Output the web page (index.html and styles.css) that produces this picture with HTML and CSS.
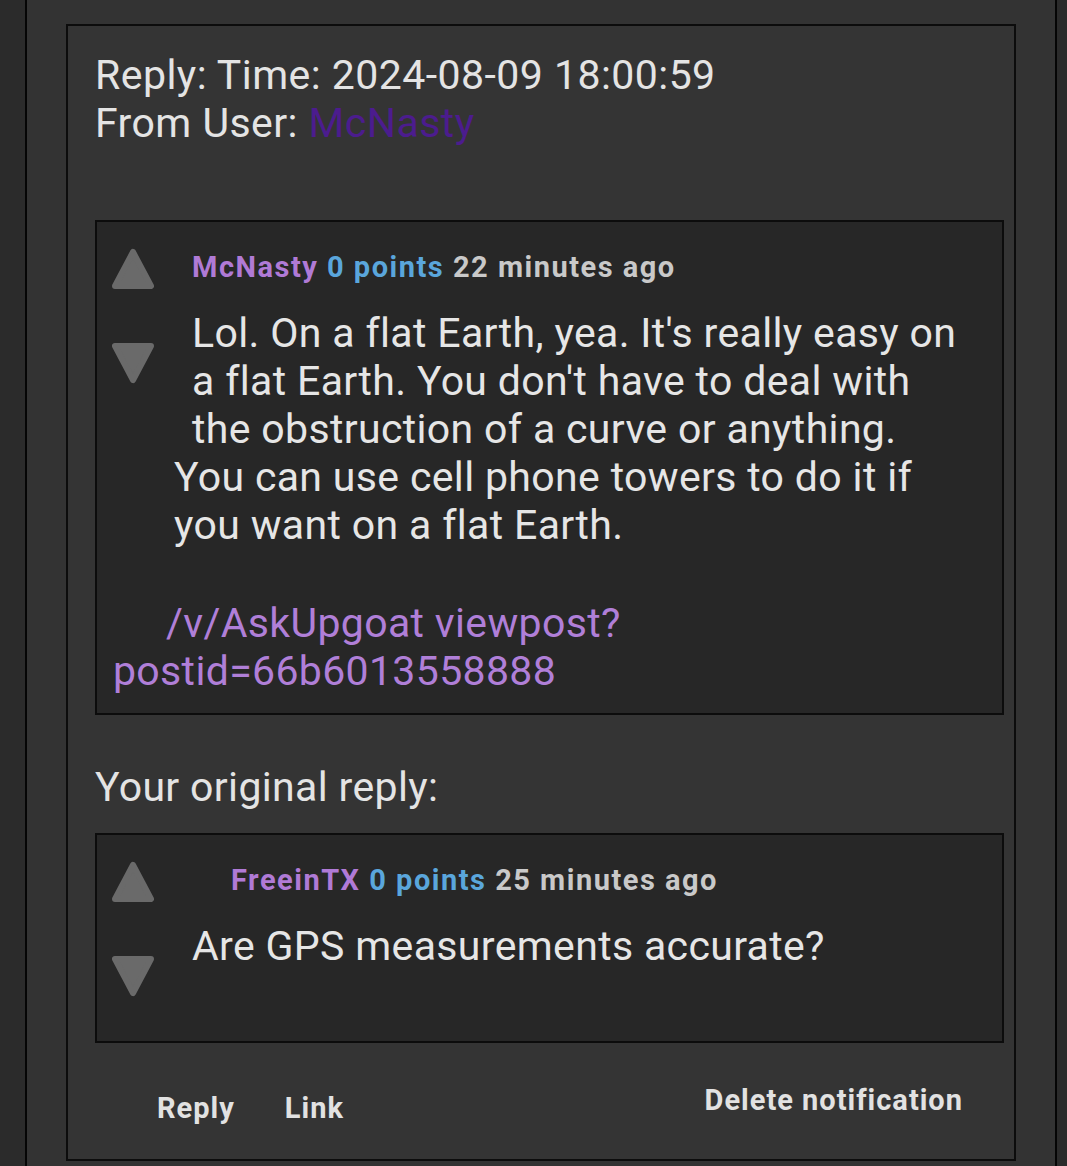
FILE: index.html
```html
<!DOCTYPE html>
<html lang="en">
<head>
    <meta charset="UTF-8">
    <meta name="viewport" content="width=device-width, initial-scale=1.0">
    <title>Reply notification</title>
    <link rel="stylesheet" href="styles.css">
</head>
<body>
    <div id="page">
        <div class="notification">
            <div class="notify-head">
                Reply: Time: 2024-08-09 18:00:59
                <br>
                From User: <a href="#" class="from-user">McNasty</a>
            </div>

            <div class="comment">
                <div class="comment-top">
                    <div class="votes">
                        <svg class="arrow" viewBox="0 0 42 42"><polygon points="21,4 39,38 3,38"/></svg>
                        <svg class="arrow" viewBox="0 0 42 42"><polygon points="3,4 39,4 21,38"/></svg>
                    </div>
                    <div class="entry">
                        <p class="tagline">
                            <a href="#" class="author">McNasty</a>
                            <span class="score">0 points</span>
                            <span class="time">22 minutes ago</span>
                        </p>
                        <p class="md">Lol. On a flat Earth, yea. It's really easy on a flat Earth. You don't have to deal with the obstruction of a curve or anything.</p>
                    </div>
                </div>
                <p class="md more">You can use cell phone towers to do it if you want on a flat Earth.</p>
                <p class="md post-link"><a href="#">/v/AskUpgoat viewpost?<br>postid=66b6013558888</a></p>
            </div>

            <div class="original">Your original reply:</div>

            <div class="comment">
                <div class="comment-top">
                    <div class="votes">
                        <svg class="arrow" viewBox="0 0 42 42"><polygon points="21,4 39,38 3,38"/></svg>
                        <svg class="arrow" viewBox="0 0 42 42"><polygon points="3,4 39,4 21,38"/></svg>
                    </div>
                    <div class="entry">
                        <p class="tagline indent">
                            <a href="#" class="author">FreeinTX</a>
                            <span class="score">0 points</span>
                            <span class="time">25 minutes ago</span>
                        </p>
                        <p class="md">Are GPS measurements accurate?</p>
                    </div>
                </div>
            </div>

            <div class="actions">
                <div class="left-actions">
                    <a href="#">Reply</a>
                    <a href="#">Link</a>
                </div>
                <a href="#" class="delete">Delete notification</a>
            </div>
        </div>
    </div>
</body>
</html>
```

FILE: styles.css
```css
* {
    margin: 0;
    padding: 0;
    box-sizing: border-box;
}

a {
    text-decoration: none;
    color: inherit;
}

html, body {
    height: 100vh;
    overflow: hidden;
    background: #2b2b2b;
    font-family: Roboto, "Noto Sans", sans-serif;
    color: #e4e4e4;
}

#page {
    margin-left: 25px;
    width: 1032px;
    min-height: 100vh;
    padding: 24px 39px 0;
    background: #333333;
    border-left: 2px solid #050505;
    border-right: 2px solid #050505;
}

.notification {
    padding: 25px 10px 0 27px;
    border: 2px solid #0c0c0c;
    background: #343434;
}

.notify-head {
    font-size: 41px;
    line-height: 48px;
    letter-spacing: 0.45px;
}

.from-user {
    color: #4c1c8e;
}

.comment {
    margin-top: 73px;
    padding: 0 0 18px;
    background: #272727;
    border: 2px solid #0c0c0c;
}

.comment-top {
    display: flex;
}

.votes {
    display: flex;
    flex-direction: column;
    gap: 52px;
    width: 95px;
    padding: 26px 0 26px 15px;
}

.arrow {
    width: 42px;
    height: 42px;
    display: block;
}

.arrow polygon {
    fill: #6a6a6a;
    stroke: #6a6a6a;
    stroke-width: 6;
    stroke-linejoin: round;
}

.entry {
    flex: 1;
    padding-top: 27px;
    padding-right: 35px;
}

.tagline {
    font-size: 29px;
    line-height: 36px;
    font-weight: 700;
    letter-spacing: 1.5px;
}

.tagline.indent {
    padding-left: 39px;
}

.author {
    color: #b07ad6;
}

.score {
    color: #5aa6dc;
}

.time {
    color: #c9c9c9;
}

.md {
    margin-top: 24px;
    font-size: 41px;
    line-height: 48px;
    letter-spacing: 0.35px;
    color: #e6e6e6;
}

.more {
    margin: 0 35px 0 77px;
}

.post-link {
    margin: 50px 35px 0 16px;
    text-indent: 53px;
    color: #b07fd8;
}

.original {
    margin-top: 48px;
    font-size: 41px;
    line-height: 48px;
    letter-spacing: 0.35px;
}

.original + .comment {
    margin-top: 22px;
}

.actions {
    display: flex;
    justify-content: space-between;
    align-items: flex-start;
    padding: 39px 41px 33px 62px;
    font-size: 29px;
    line-height: 36px;
    font-weight: 700;
    letter-spacing: 1px;
    color: #e2e2e2;
}

.left-actions {
    display: flex;
    gap: 50px;
    margin-top: 8px;
}
```
